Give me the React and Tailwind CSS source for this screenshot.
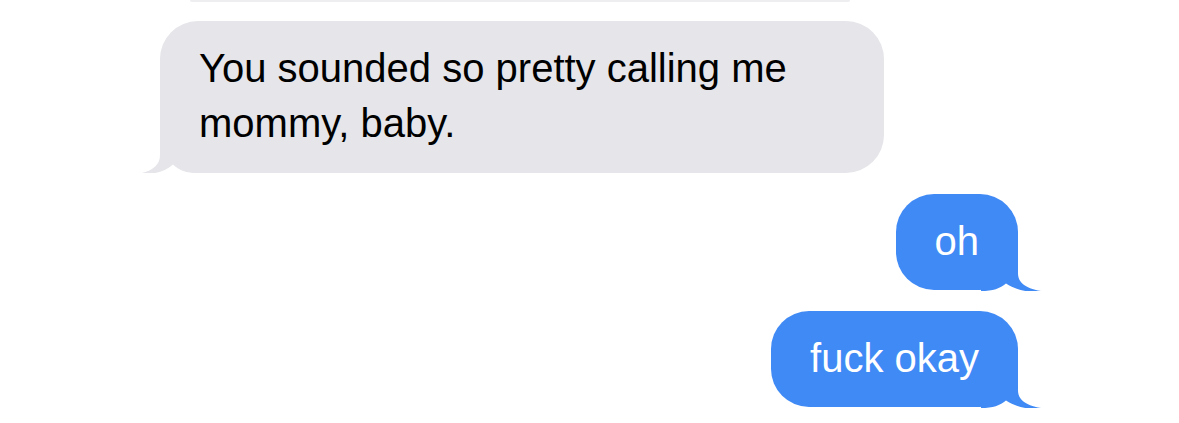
import React from 'react';

const font = { fontFamily: '"Liberation Sans", Arial, sans-serif' };

const GrayTail = () => (
  <svg
    className="absolute left-[-18px] bottom-0"
    width="60"
    height="40"
    viewBox="142 133 60 40"
  >
    <path
      d="M160 133 L160 155 C160 164 154 170 142 173 C154 175 165 171.5 173 164.5 C179 170.5 186 173 198 173 L198 133 Z"
      fill="#e5e5ea"
    />
  </svg>
);

const BlueTail = () => (
  <svg
    className="absolute right-[-23px] bottom-[-1px]"
    width="60"
    height="40"
    viewBox="981 251 60 40"
  >
    <path
      d="M1018 251 L1018 273 C1018 282 1024 288 1041 291 C1028 293 1016 290 1006 283.5 C1000 288.5 993 291 981 291 L981 251 Z"
      fill="#408af6"
    />
  </svg>
);

const Received = ({ children }) => (
  <div className="relative w-[724px] rounded-[38px] bg-[#e5e5ea] px-[39px] pt-[20px] pb-[22px]">
    <GrayTail />
    <p className="relative text-[40px] leading-[55px] text-black" style={font}>
      {children}
    </p>
  </div>
);

const Sent = ({ children }) => (
  <div className="relative rounded-[38px] bg-[#408af6] px-[39px] pt-[20px] pb-[21px]">
    <BlueTail />
    <p className="relative text-[40px] leading-[55px] text-white whitespace-nowrap" style={font}>
      {children}
    </p>
  </div>
);

export default function App() {
  return (
    <div className="w-[1179px] h-[423px] bg-white overflow-hidden flex flex-col">
      <div className="ml-[190px] w-[660px] h-[2px] rounded-b-full bg-[#eeeef1]" />
      <div className="flex flex-col gap-[21px] mt-[19px]">
        <div className="pl-[160px]">
          <Received>You sounded so pretty calling me mommy, baby.</Received>
        </div>
        <div className="flex justify-end pr-[161px]">
          <Sent>oh</Sent>
        </div>
        <div className="flex justify-end pr-[161px]">
          <Sent>fuck okay</Sent>
        </div>
      </div>
    </div>
  );
}
